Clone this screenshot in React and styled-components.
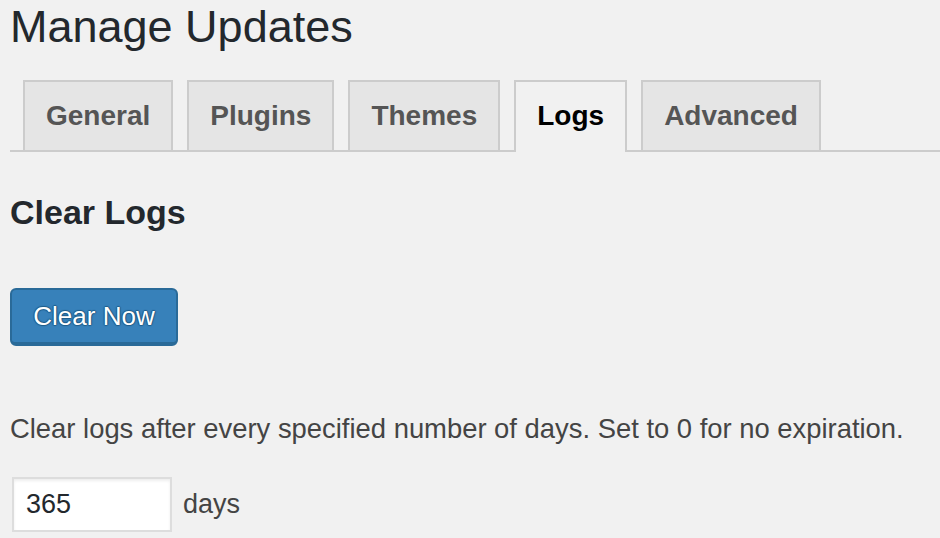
import React from "react";
import styled, { createGlobalStyle } from "styled-components";

const GlobalStyle = createGlobalStyle`
  html, body {
    margin: 0;
    padding: 0;
    background: #f1f1f1;
  }
  body {
    font-family: "Liberation Sans", Arial, sans-serif;
    color: #23282d;
    overflow: hidden;
  }
`;

const Wrap = styled.div`
  padding: 0 0 0 10px;
`;

const Title = styled.h1`
  margin: 0;
  padding-top: 1px;
  font-size: 45px;
  font-weight: 400;
  line-height: 52px;
  color: #23282d;
`;

const TabBar = styled.nav`
  display: flex;
  margin-top: 27px;
  padding-left: 13px;
  gap: 14px;
  border-bottom: 2px solid #cccccc;
  height: 70px;
`;

const Tab = styled.a`
  display: flex;
  align-items: center;
  padding: 0 21px;
  padding-bottom: ${(p) => (p.$active ? "2px" : "0")};
  border: 2px solid #cccccc;
  border-bottom: none;
  background: ${(p) => (p.$active ? "#f1f1f1" : "#e5e5e5")};
  color: ${(p) => (p.$active ? "#000000" : "#555555")};
  font-size: 28px;
  font-weight: 700;
  text-decoration: none;
  box-sizing: border-box;
  height: ${(p) => (p.$active ? "72px" : "70px")};
`;

const Heading = styled.h2`
  margin: 38px 0 0;
  font-size: 34px;
  font-weight: 700;
  line-height: 44px;
  color: #23282d;
`;

const Button = styled.button`
  display: block;
  margin-top: 54px;
  height: 58px;
  width: 168px;
  padding: 0;
  border: 2px solid #2a6a98;
  border-bottom-width: 4px;
  border-radius: 6px;
  background: #3781ba;
  color: #ffffff;
  font-family: "Liberation Sans", Arial, sans-serif;
  font-size: 26px;
  text-shadow: 0 -1px 1px #1f5c88, 1px 0 1px #1f5c88, 0 1px 1px #1f5c88, -1px 0 1px #1f5c88;
`;

const Note = styled.p`
  margin: 65px 0 0;
  font-size: 27.4px;
  line-height: 36px;
  color: #444444;
`;

const Row = styled.div`
  display: flex;
  align-items: center;
  gap: 11px;
  margin-top: 30px;
  padding-left: 2px;
`;

const NumberInput = styled.input`
  box-sizing: border-box;
  width: 160px;
  height: 55px;
  padding: 0 12px;
  border: 2px solid #dddddd;
  background: #ffffff;
  box-shadow: inset 0 2px 3px rgba(0, 0, 0, 0.07);
  font-family: "Liberation Sans", Arial, sans-serif;
  font-size: 27px;
  color: #23282d;
  outline: none;
`;

const Unit = styled.span`
  font-size: 27px;
  color: #444444;
`;

const tabs = ["General", "Plugins", "Themes", "Logs", "Advanced"];

export default function App() {
  return (
    <Wrap>
      <GlobalStyle />
      <Title>Manage Updates</Title>
      <TabBar>
        {tabs.map((t) => (
          <Tab key={t} href="#" $active={t === "Logs"}>
            {t}
          </Tab>
        ))}
      </TabBar>
      <Heading>Clear Logs</Heading>
      <Button type="button">Clear Now</Button>
      <Note>Clear logs after every specified number of days. Set to 0 for no expiration.</Note>
      <Row>
        <NumberInput type="text" defaultValue="365" />
        <Unit>days</Unit>
      </Row>
    </Wrap>
  );
}
